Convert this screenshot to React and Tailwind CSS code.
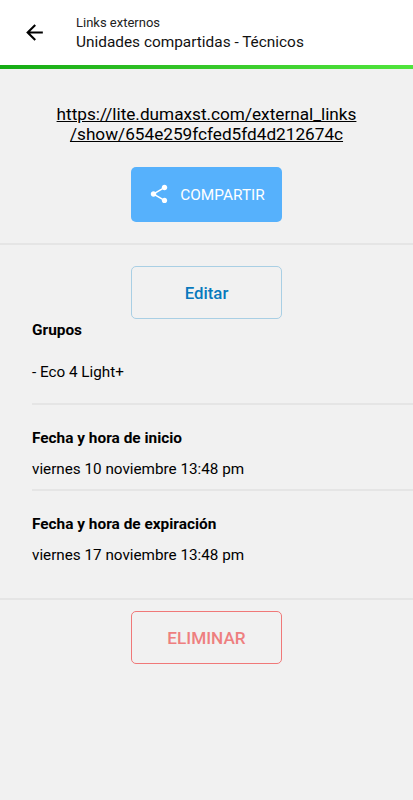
import React from "react";

const linkData = {
  url: ["https://lite.dumaxst.com/external_links", "/show/654e259fcfed5fd4d212674c"],
  groups: ["Eco 4 Light+"],
  start: "viernes 10 noviembre 13:48 pm",
  end: "viernes 17 noviembre 13:48 pm",
};

const Header = () => (
  <header className="bg-white">
    <div className="flex h-[65px] items-center">
      <button className="ml-[22px] mr-[29px] -mt-px" aria-label="Volver">
        <svg width="25" height="25" viewBox="0 0 24 24" fill="#000">
          <path d="M20 11H7.83l5.59-5.59L12 4l-8 8 8 8 1.41-1.41L7.83 13H20v-2z" />
        </svg>
      </button>
      <div>
        <p className="text-[13px] leading-[18px] text-[#222]">Links externos</p>
        <p className="text-[15.4px] leading-[20px] text-[#111]">Unidades compartidas - Técnicos</p>
      </div>
    </div>
    <div className="h-1 bg-linear-to-r from-[#14ab14] to-[#50e53c]" />
  </header>
);

const Field = ({ label, value }) => (
  <div>
    <h3 className="text-[15.4px] leading-5 font-bold">{label}</h3>
    <p className="mt-[11px] text-[15.25px] leading-5">{value}</p>
  </div>
);

const App = () => {
  return (
    <div className="h-[800px] w-[413px] overflow-hidden bg-[#f1f1f1] font-[Roboto,sans-serif] text-black">
      <Header />

      {/* Link */}
      <section className="flex h-[176px] flex-col items-center border-b-2 border-[#e5e5e5] pt-[35px]">
        <a href="#" className="text-center text-[17.2px] leading-5 underline">
          {linkData.url[0]}
          <br />
          {linkData.url[1]}
        </a>
        <button className="mt-[23px] flex h-[55px] w-[151px] items-center justify-center gap-[10px] rounded-[5px] bg-[#56b1fc] text-[15.4px] text-white">
          <svg width="22" height="22" viewBox="0 0 24 24" fill="currentColor" className="-mt-px">
            <path d="M18 16.08c-.76 0-1.44.3-1.96.77L8.91 12.7c.05-.23.09-.46.09-.7s-.04-.47-.09-.7l7.05-4.11c.54.5 1.25.81 2.04.81 1.66 0 3-1.34 3-3s-1.34-3-3-3-3 1.34-3 3c0 .24.04.47.09.7L8.04 9.81C7.5 9.31 6.79 9 6 9c-1.66 0-3 1.34-3 3s1.34 3 3 3c.79 0 1.5-.31 2.04-.81l7.12 4.16c-.05.21-.08.43-.08.65 0 1.61 1.31 2.92 2.92 2.92s2.92-1.31 2.92-2.92-1.31-2.92-2.92-2.92z" />
          </svg>
          <span className="pt-[3px]">COMPARTIR</span>
        </button>
      </section>

      {/* Details */}
      <section className="border-b-2 border-[#e5e5e5] pt-[21px]">
        <button className="mx-auto flex h-[53px] w-[151px] items-center justify-center rounded-[5px] border border-[#a9cfe4] pt-[3px] text-[16.8px] font-medium text-[#0879bd]">
          Editar
        </button>
        <div className="ml-8">
          <div className="h-[86px] border-b-2 border-[#e5e5e5] pt-[1px]">
            <h3 className="text-[15.4px] leading-5 font-bold">Grupos</h3>
            {linkData.groups.map((group) => (
              <p key={group} className="mt-[22px] text-[15.25px] leading-5">- {group}</p>
            ))}
          </div>
          <div className="h-[86px] border-b-2 border-[#e5e5e5] pt-[23px]">
            <Field label="Fecha y hora de inicio" value={linkData.start} />
          </div>
          <div className="h-[107px] pt-[23px]">
            <Field label="Fecha y hora de expiración" value={linkData.end} />
          </div>
        </div>
      </section>

      <button className="mx-auto mt-[11px] flex h-[53px] w-[151px] items-center justify-center rounded-[5px] border border-[#f07878] pt-[3px] text-[17.2px] font-medium text-[#ee7f7f]">
        ELIMINAR
      </button>
    </div>
  );
};

export default App;
